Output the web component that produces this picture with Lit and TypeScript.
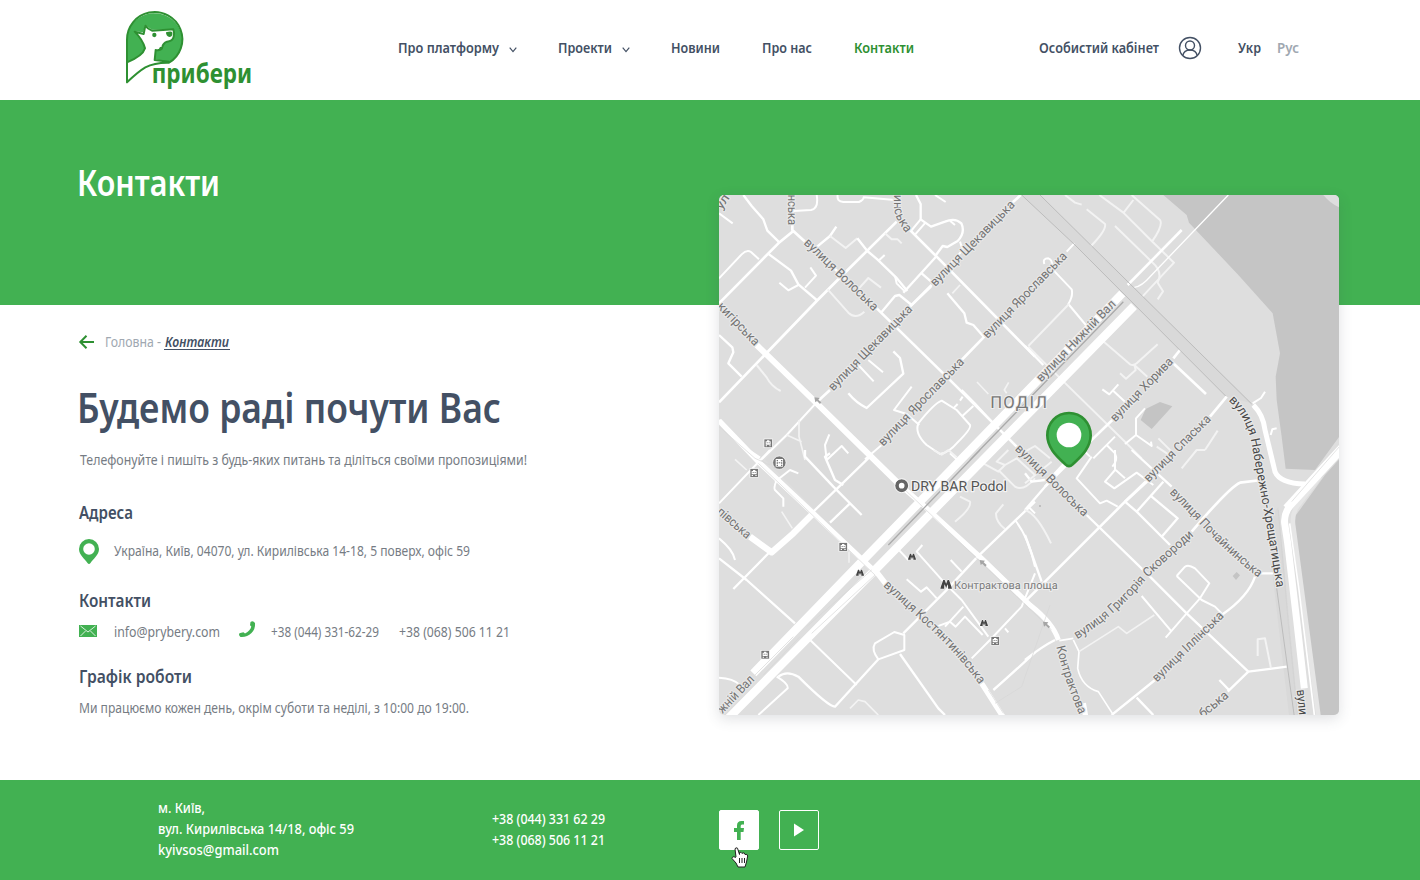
import { LitElement, html, svg, css } from "lit";
import { customElement, property } from "lit/decorators.js";

/* One line of text condensed to a fixed measure. */
@customElement("fit-text")
class FitText extends LitElement {
  @property() text = "";
  @property({ type: Number }) measure = 100;
  static styles = css`
    :host { display: block; flex: none; line-height: 0; }
    svg { display: block; overflow: visible; height: 20px; fill: currentColor; }
  `;
  render() {
    return html`<svg width=${this.measure}>
      <text x="0" y="15" textLength=${this.measure} lengthAdjust="spacingAndGlyphs">${this.text}</text>
    </svg>`;
  }
}

const t = (text: string, measure: number, cls = "") =>
  html`<fit-text class=${cls} .text=${text} .measure=${measure}></fit-text>`;

/* ---- Map data: three units per pixel; quadrants are shifted by 930 / 780 ---- */
type Road = [string, number, string?];
const L = "#f3f3f3";
const NW: Road[] = [
  ["M85 15L110 48L145 88L157 122L193 157", 7],
  ["M12 340L190 160L235 123L398 272", 8],
  ["M232 122V15", 8],
  ["M12 265L80 193Q95 178 108 186L132 208", 6],
  ["M158 190L228 242L250 283L305 330", 7],
  ["M193 278L220 301L250 285M286 232L303 257L270 293", 6],
  ["M12 70L53 100", 6],
  ["M12 637L305 333L398 240L545 95", 8],
  ["M300 175L345 138L364 110", 7],
  ["M345 138L392 174L427 145", 6, L],
  ["M427 145L457 183L487 208L543 262L577 303", 7],
  ["M493 210L509 195M540 258L545 280L567 302", 6],
  ["M305 15Q312 55 288 60L235 63M368 15Q365 35 385 36H432Q446 30 446 22L540 30", 6],
  ["M603 15L617 42V88L648 110L690 95Q720 82 739 100Q752 128 728 153L697 171L683 168L663 195", 7],
  ["M617 88L588 123M632 97L600 134M705 92L720 105M660 15L692 36", 6],
  ["M510 130L530 148L548 148L560 160", 6, L],
  ["M338 298L400 368Q422 389 448 365", 6, L],
  ["M432 295L460 264L498 293", 6, L],
  ["M580 115L665 200L960 500", 8],
  ["M498 368L540 318L553 315L590 345M663 200L565 308M648 290L590 345M620 250L652 278", 7],
  ["M470 340L700 565L830 695L905 770", 8],
  ["M735 155L743 180L670 260", 6],
  ["M917 15L890 40M650 285L585 350", 8],
  ["M697 310L748 370L755 398L775 405L806 440", 7],
  ["M735 285L712 310", 5, L],
  ["M808 440L740 510M345 600L305 637", 8],
  ["M12 435L52 472L55 487L40 520L80 560", 7],
  ["M125 525L155 562Q168 588 197 603", 6, L],
  ["M535 484L555 504L565 551L455 654Q425 640 400 610", 7],
  ["M430 525L476 574M460 510L504 547", 6],
  ["M590 590L537 660L575 672L613 705", 6],
  ["M610 700Q598 730 635 765L675 792Q700 790 730 755Q770 715 765 705L725 660L680 632Q658 640 610 700Z", 6],
  ["M743 620L735 632M715 655L728 642M742 678L775 648M705 790L725 808M500 765L450 808", 6],
  ["M786 576L820 612M881 577L868 600L875 610", 5, L],
  ["M343 733L330 765L335 810M335 810L380 768L400 790", 6],
  ["M305 637L215 735L140 808", 6],
  ["M215 735L260 755M252 690V740L270 810", 5, L],
  ["M12 690L100 780L135 803", 7],
  ["M830 695L780 640L740 600", 6],
];
const NE: Road[] = [
  ["M148 160L125 185M58 222Q52 205 70 205Q85 210 80 235L140 298Q145 318 130 342L185 408", 6],
  ["M132 342L10 468M10 470L60 520L300 755L350 805", 6, L],
  ["M0 468L55 525", 7],
  ["M185 58L240 102Q245 120 198 168M120 15L150 38L170 44", 6, L],
  ["M223 15L295 68L380 153L447 218L352 320M320 15L405 90Q415 105 383 152M325 30L296 68", 6, L],
  ["M270 108L380 215Q415 245 398 278L414 304L398 328", 6, L],
  ["M470 120L308 285", 8],
  ["M610 15L380 255Q350 290 328 292", 4],
  ["M233 452L315 523Q325 528 335 520L398 463M285 550L303 566L332 540L328 525L367 560", 6, L],
  ["M440 515L543 612", 8],
  ["M465 480L445 505M262 690L195 755L60 890", 8],
  ["M605 620L555 680M362 875L300 935", 8],
  ["M232 598L253 613L280 583M262 600L300 635M360 655L333 685V735L300 762M333 735L380 768L378 755", 6],
  ["M270 740L205 805M245 765L270 790Q280 810 262 830", 6],
  ["M400 745L440 785M395 770L440 800M540 780L578 722M540 780H515L470 835M0 785L30 768L75 805", 6, L],
  ["M683 640L708 624L720 605M737 735L742 718L755 715", 6],
];
const SW: Road[] = [
  ["M12 160L165 0M12 265Q55 300 60 330", 6],
  ["M12 325L95 390L240 520M55 417L170 300", 7],
  ["M185 90Q175 115 180 120L205 145V170M180 95L225 60L250 70", 6],
  ["M200 185L232 235M60 28L95 60", 5, L],
  ["M270 0V20L355 110L440 195M345 10L330 20L360 90L385 105M295 185L465 20M345 218L405 160", 7],
  ["M655 0L680 14L700 0L725 22M735 140L765 155Q770 175 720 215", 6, L],
  ["M865 163L843 190Q842 215 870 237M805 40L850 65L870 45L845 35L880 0M850 60L900 110Q925 125 960 85M870 45L905 25L960 75", 6, L],
  ["M1110 980L1200 1070", 7],
  ["M960 155L788 320L690 425L565 550", 7],
  ["M900 210Q940 260 960 350M940 170L960 190M0 0", 6],
  ["M550 298L580 330M622 285L605 305L690 400L740 450L820 560M707 330L740 365M575 388L618 425L635 412L665 445", 6],
  ["M665 530L705 515L722 530L750 500L803 555M690 530L745 470", 6],
  ["M960 370L920 470L825 570L770 625M870 535L880 547", 6],
  ["M538 546L480 580Q468 600 490 628L568 600L568 555Z", 6],
  ["M490 628L360 770Q340 770 250 680Q215 660 190 680M555 612L670 775L690 795", 7],
  ["M280 565L425 705M12 683Q55 685 75 705M185 680Q220 700 218 715L130 795", 6],
  ["M405 775L430 750L450 755L490 795", 5, L],
  ["M960 607Q870 690 835 720", 7],
  ["M402 305V338", 4, L],
];
const SE: Road[] = [
  ["M0 180L155 0M155 0L85 75M0 70L20 95L60 90M0 255L50 395", 7],
  ["M0 455L220 235L300 155L420 45", 8],
  ["M185 195L365 370L485 490L670 665L785 650M670 665L608 725M583 690L612 720", 7],
  ["M0 100L80 35M0 180Q35 190 78 280", 6, L],
  ["M200 20L155 85L225 160L245 152L278 170M270 0L270 60L240 95L268 115L335 68L385 105M272 60L300 85M175 0L195 20", 6],
  ["M320 0L440 110M415 95L335 185L300 155M380 140L458 205L412 258M335 185L435 285", 7],
  ["M710 90L645 98Q615 110 500 245", 8],
  ["M455 378L480 350Q490 342 510 355L553 400L525 445L485 490L422 563M455 378L530 450L570 470L590 490M350 438L440 545", 6],
  ["M690 380Q670 440 590 495M390 690L260 795M335 743L385 795M700 370H745", 7],
  ["M103 572L145 565M145 570L162 605L158 655Q170 710 220 725L262 790", 5],
  ["M162 605L280 530L305 550L388 495", 5, L],
  ["M0 630Q50 590 90 570", 7],
  ["M698 618V568L720 565L738 655", 6, L],
];
const MAJOR: Road[] = [
  ["M125 465L300 635L555 885", 18],
  ["M555 885L630 950L800 1105L945 1245Q1015 1300 1030 1350", 15],
  ["M12 692L130 815L295 970L480 1145", 16],
  ["M295 970L235 1030L170 1087L105 1040", 19],
  ["M1222 310L445 1110L115 1450", 25],
  ["M1257 348L480 1140L35 1590", 25],
  ["M480 1140L515 1185M800 1480L870 1590M1105 1540L1112 1580", 16],
];

const roads = (list: Road[]) =>
  list.map(([d, w, c]) => svg`<path d=${d} stroke=${c ?? "#fff"} stroke-width=${w} />`);

type Label = [string, number, number, number, number];
const LABELS: Label[] = [
  ["вулиця Волоська", 271, 154, 482, 358],
  ["вулиця Щекавицька", 654, 285, 895, 40],
  ["вулиця Щекавицька", 348, 598, 588, 353],
  ["вулиця Ярославська", 498, 764, 743, 511],
  ["вулиця Ярославська", 811, 441, 1052, 194],
  ["кигірська", 12, 345, 125, 463],
  ["нська", 229, 14, 229, 105],
  ["ул", 12, 56, 38, 18],
  ["вулиця Нижній Вал", 972, 571, 1198, 338],
  ["вулиця Хорива", 1194, 691, 1370, 511],
  ["вулиця Спаська", 1295, 872, 1483, 683],
  ["вулиця Волоська", 905, 772, 1112, 975],
  ["вулиця Іллінська", 1320, 1471, 1522, 1273],
  ["бська", 1458, 1578, 1537, 1513],
  ["півська", 10, 962, 101, 1041],
  ["жній Вал", 16, 1566, 114, 1464],
];
const label = ([s, x1, y1, x2, y2]: Label) => {
  const len = Math.hypot(x2 - x1, y2 - y1);
  const a = (Math.atan2(y2 - y1, x2 - x1) * 180) / Math.PI;
  return svg`<text class="street" transform=${`translate(${x1} ${y1}) rotate(${a})`} y="9"
    textLength=${len} lengthAdjust="spacingAndGlyphs">${s}</text>`;
};
const CURVES: [string, string, string, number, string][] = [
  ["c1", "M538 14V62Q545 95 574 130", "инська", 125, "street"],
  ["c2", "M1363 908L1500 1050Q1590 1135 1634 1165", "вулиця Почайнинська", 370, "street"],
  ["c3", "M1087 1348Q1210 1272 1302 1158L1441 1033", "вулиця Григорія Сковороди", 470, "street"],
  ["c4", "M1024 1370Q1048 1470 1092 1572", "Контрактова", 216, "street"],
  ["c5", "M504 1188L640 1312Q735 1400 794 1486", "вулиця Костянтинівська", 414, "street"],
  ["c6", "M1540 632Q1602 690 1613 780L1655 1010L1685 1194", "вулиця Набережно-Хрещатицька", 588, "street dark"],
  ["c7", "M1745 1500L1754 1590", "вули", 76, "street dark"],
];

const train = (x: number, y: number) => svg`<g transform=${`translate(${x} ${y})`}>
  <rect width="25" height="26" fill="#777" stroke="#fff" stroke-width="2"/>
  <path fill="#fff" d="M9 4h7v3h4v10H5V7h4zM5 19h4v3H5zM16 19h4v3h-4z"/>
  <path fill="#777" d="M8 10h3v3H8zM14 10h3v3h-3z"/></g>`;
const metro = (x: number, y: number, s: number) => svg`<path transform=${`translate(${x} ${y}) scale(${s})`}
  fill="#444" stroke="#fff" stroke-width="2" paint-order="stroke" d="M0 18L1 14L6 0H9L12 8L15 0H18L23 14L24 18H16L16 13L15 9L12 17L9 9L8 13V18Z"/>`;
const arrow = (x: number, y: number) => svg`<path transform=${`translate(${x} ${y})`} fill="#a5a5a5" d="M0 0L16 2L12 7L21 15L17 20L8 11L3 15Z"/>`;

@customElement("city-map")
class CityMap extends LitElement {
  static styles = css`
    :host { display: block; width: 620px; height: 520px; border-radius: 5px; overflow: hidden; background: #dedede; }
    svg { display: block; }
    .roads { fill: none; stroke-linejoin: round; stroke-linecap: butt; }
    text { font-family: Roboto, "Noto Sans", sans-serif; text-rendering: geometricPrecision; }
    .street { font-size: 38px; fill: #737373; stroke: #e8e8e8; stroke-width: 7px; paint-order: stroke; stroke-linejoin: round; }
    .dark { fill: #484848; }
    .area { font-size: 50px; fill: #777; stroke: #eee; stroke-width: 6px; paint-order: stroke; }
    .place { font-size: 42px; fill: #555; stroke: #f4f4f4; stroke-width: 7px; paint-order: stroke; }
    .stop { font-size: 33px; fill: #7b7b7b; stroke: #eee; stroke-width: 6px; paint-order: stroke; }
  `;
  render() {
    return html`<svg width="620" height="520" viewBox="12 15 1860 1560">
      <path fill="#dbdbdb" d="M305 650L480 810L650 950L440 1105L300 960L150 810Z"/>
      <path fill="#c5c5c5" d="M1345 15L1415 75L1422 98L1570 255L1673 370L1695 490L1682 560L1685 630L1700 740L1712 836L1800 840L1880 730V15Z"/>
      <path fill="#c5c5c5" d="M1830 855L1880 800V1580H1815L1740 1030L1736 985Z"/>
      <path fill="#dedede" d="M1825 15H1880V55Q1850 45 1825 15Z"/>
      <path fill="#c4c4c4" d="M1277 690L1292 657L1335 636L1372 649L1310 717ZM1553 1158l12-12l10 10l-12 14z"/>
      <path fill="#d9d9d9" d="M920 15L1080 165L1535 620L1610 640L975 15Z"/>
      <path fill="#d9d9d9" d="M1655 1000L1700 1390L1722 1575H1750L1690 950Z"/>
      <g class="roads">${roads(NW)}
        <g transform="translate(930 0)">${roads(NE)}</g>
        <g transform="translate(0 780)">${roads(SW)}</g>
        <g transform="translate(930 780)">${roads(SE)}</g>
        ${roads(MAJOR)}
        <path stroke="#e6e6e6" stroke-width="14" d="M1815 860L1742 955Q1730 980 1735 1010L1812 1590"/>
        <path stroke="#fff" stroke-width="15" d="M1615 645Q1645 675 1650 720L1680 845Q1695 880 1770 882"/>
        <path stroke="#fff" stroke-width="26" d="M1890 765L1715 955"/>
        <path stroke="#fff" stroke-width="21" d="M1740 928Q1705 965 1709 1000L1718 1060L1745 1290L1768 1495"/>
        <path stroke="#fff" stroke-width="5" d="M1724 1000L1752 1200L1800 1590"/>
        <path stroke="#d7d7d7" stroke-width="2" d="M1880 762L1730 935"/>
        <path stroke="#bcbcbc" stroke-width="3" d="M920 15L1080 165L1532 618M975 15L1610 642M1683 1180L1738 1580"/>
        <path stroke="#d0d0d0" stroke-width="2" d="M1690 960L1720 1300L1748 1580"/>
        <path stroke="#aaa" stroke-width="4" d="M1225 335L950 618M930 640L765 810M795 780L520 1065"/>
        <path stroke="#d7d7d7" stroke-width="2" d="M12 710L120 805L165 825M560 890L1010 1320M275 1310L470 1140M290 1330L480 1155M235 1340L120 1455M255 1340L145 1455M820 1500L865 1570M1005 1245L920 1490L840 1540M130 820L480 1155"/>
      </g>
      ${arrow(298, 622)}${arrow(794, 1110)}${arrow(984, 1295)}
      ${LABELS.map(label)}
      ${CURVES.map(([id, d, s, len, cls]) => svg`<path id=${id} d=${d} fill="none"/>
        <text class=${cls}><textPath href=${"#" + id} textLength=${len} lengthAdjust="spacingAndGlyphs">${s}</textPath></text>`)}
      <text class="area" x="826" y="653" textLength="170">ПОДІЛ</text>
      <text class="place" x="588" y="902" textLength="288" lengthAdjust="spacingAndGlyphs">DRY BAR Podol</text>
      <text class="stop" x="717" y="1196" textLength="311" lengthAdjust="spacingAndGlyphs">Контрактова площа</text>
      <circle cx="560" cy="887" r="14" fill="#fff" stroke="#666" stroke-width="11"/>
      <circle cx="560" cy="887" r="21" fill="none" stroke="#fff" stroke-width="2"/>
      <circle cx="193" cy="818" r="20" fill="#777" stroke="#fff" stroke-width="2"/>
      <path fill="#fff" d="M182 807h22v23h-22z"/><path fill="#777" d="M185 810h4v4h-4zm0 7h4v4h-4zm0 7h4v4h-4zm13-14h4v4h-4zm0 7h4v4h-4zm0 7h4v4h-4zM191 817h5v3h-5z"/>
      ${train(147, 747)}${train(105, 836)}${train(372, 1058)}${train(138, 1381)}${train(828, 1340)}
      ${metro(423, 1139, 1)}${metro(579, 1091, 1)}${metro(795, 1290, 1)}${metro(676, 1170, 1.45)}
      <circle cx="975" cy="948" r="3" fill="#b5b5b5"/>
      <path fill="#42b152" stroke="#2e9032" stroke-width="8" d="M1062 669C1024 669 997 700 997 736C997 777 1032 804 1051 823Q1062 834 1073 823C1092 804 1127 777 1127 736C1127 700 1100 669 1062 669Z"/>
      <circle cx="1062" cy="735" r="37" fill="#fff"/>
    </svg>`;
  }
}

@customElement("app-root")
class AppRoot extends LitElement {
  static styles = css`
    :host { display: flex; flex-direction: column; width: 1420px; height: 880px; overflow: hidden; background: #fff;
      color: #435064; font-family: "Noto Sans", "Open Sans", sans-serif; font-size: 14.6px; font-weight: 400; }
    * { box-sizing: border-box; }
    svg { display: block; flex: none; overflow: visible; }
    header { height: 100px; flex: none; display: flex; padding-left: 125px; font-weight: 600; font-size: 14.4px; }
    .logo { margin-top: 10px; }
    .brand { font-size: 27px; font-weight: 700; }
    .nav { display: flex; height: 20px; margin: 38px 0 0 145px; width: 641px; }
    .item { display: flex; }
    .item + .item { margin-left: 42px; }
    .item.next { margin-left: 41px; }
    .chev { margin: 9px 0 0 10px; }
    .on { color: #2e9032; }
    .account { display: flex; margin-top: 38px; }
    .avatar { margin: -2px 37px 0 20px; }
    .mute { color: #a0a8b1; margin-left: 16px; }
    .hero { height: 205px; flex: none; background: #42b152; padding: 81px 0 0 77px; color: #fff; }
    .title { font-size: 36.5px; font-weight: 600; }
    .body { height: 475px; flex: none; display: flex; padding-left: 79px; color: #767c84; }
    .left { width: 640px; padding-top: 27px; }
    .crumbs { display: flex; height: 20px; color: #a0a8b1; }
    .back { margin: 3px 11px 0 0; }
    .here { font-style: italic; font-weight: 600; color: #435064; border-bottom: 1px solid #435064; height: 18px; padding: 0 1px; margin-left: 3px; }
    .lead { color: #435064; font-weight: 600; font-size: 41px; margin: 56px 0 0 -2px; }
    .desc { margin: 22px 0 0 1px; }
    .h3 { color: #435064; font-weight: 600; font-size: 17.8px; margin-left: -0.5px; }
    .row { display: flex; }
    .map { margin-top: -110px; height: 520px; border-radius: 5px; box-shadow: 0 4px 14px rgba(60, 70, 80, .16); }
    footer { flex: 1; background: #42b152; color: #fff; display: flex; padding-left: 158px; font-weight: 500; }
    .place { width: 334px; padding-top: 18px; display: grid; gap: 1px; align-content: start; }
    .tel { width: 227px; padding-top: 29px; display: grid; gap: 1px; align-content: start; }
    .social { display: flex; gap: 20px; padding-top: 30px; position: relative; height: 70px; }
    .btn { width: 40px; height: 40px; border: 1px solid #fff; border-radius: 2px; display: grid; place-items: center; }
    .solid { background: #fff; }
    .cursor { position: absolute; left: 12px; top: 66px; }
    .a1 { margin-top: 34px; } .a2 { margin-top: 15px; height: 25px; } .a3 { margin-top: 28px; }
    .a4 { margin-top: 9px; height: 22px; } .a5 { margin-top: 25px; } .a6 { margin-top: 10px; }
    .addr { margin: 2px 0 0 15px; }
    .tall { margin-top: 1px; }
    .mail { margin: 4px 17px 0 0; } .phone { margin: 0 15px 0 19px; } .gap { margin: 1px 0 0 20px; }
  `;
  render() {
    const chev = html`<svg class="chev" width="8" height="6"><path d="M.7 .6L4 4.6L7.300 .6" fill="none" stroke="#435064" stroke-width="1.2"/></svg>`;
    return html`
      <header>
        <svg class="logo" width="128" height="82" viewBox="46 28 384 246">
          <path fill="#42b152" d="M51 186V118A83 81 0 1 1 180 186L135 177L100 160Z"/>
          <path fill="#fff" d="M52 185C75 176 100 163 107 143C101 123 92 110 73 92L101 95L106 73L127 87H170L190 85Q195 96 192 108Q189 121 170 123Q160 128 158 139Q155 151 137 150L136 176L178 184L140 191Q110 196 52 246Z"/>
          <path fill="none" stroke="#2e9032" stroke-width="6" stroke-linejoin="round" d="M52 185C75 176 100 163 106 143C101 123 92 110 75 93L102 100L107 75Q114 85 127 90L160 88L191 86Q195 96 192 108Q189 121 172 123Q160 128 158 139Q155 151 138 148L135 178L178 183"/>
          <path fill="none" stroke="#2e9032" stroke-width="6" stroke-linejoin="round" d="M52 245V118A83 82 0 1 1 178 186Q135 185 107 200Q85 213 52 245Z"/>
          <circle cx="134" cy="103" r="6.500" fill="#2e9032"/>
          <path fill="#2e9032" d="M169 95Q184 90 188 95Q190 107 180 109Q169 107 169 95Z"/><circle cx="154" cy="143" r="5" fill="#2e9032"/>
          <text class="brand" transform="translate(126 248) scale(3)" fill="#2e9032" textLength="100.5" lengthAdjust="spacingAndGlyphs">прибери</text>
        </svg>
        <div class="nav">
          <div class="item">${t("Про платформу", 101)}${chev}</div>
          <div class="item next">${t("Проекти", 54)}${chev}</div>
          <div class="item next">${t("Новини", 49)}</div>
          <div class="item">${t("Про нас", 50)}</div>
          <div class="item on">${t("Контакти", 60)}</div>
        </div>
        <div class="account">${t("Особистий кабінет", 120)}
          <svg class="avatar" width="22" height="22" viewBox="0 0 22 22" fill="none" stroke="#435064" stroke-width="1.4"><circle cx="11" cy="12" r="10.500"/><circle cx="11" cy="9.500" r="4.500"/><path d="M3.800 19.500Q5 14 11 14Q17 14 18.200 19.500"/></svg>
          ${t("Укр", 23)}${t("Рус", 22, "mute")}
        </div>
      </header>
      <div class="hero">${t("Контакти", 143, "title")}</div>
      <div class="body">
        <div class="left">
          <div class="crumbs">
            <svg class="back" width="15" height="14" fill="none" stroke="#2e9032" stroke-width="2"><path d="M15 7H1.500M7.500 .7L1.300 7L7.500 13.300"/></svg>
            ${t("Головна -", 56)}<div class="here">${t("Контакти", 64)}</div>
          </div>
          ${t("Будемо раді почути Вас", 424, "lead")}
          ${t("Телефонуйте і пишіть з будь-яких питань та діліться своїми пропозиціями!", 447, "desc")}
          ${t("Адреса", 54, "h3 a1")}
          <div class="row a2"><svg width="20" height="25"><path fill="#42b152" fill-rule="evenodd" d="M10 0A10 10 0 0 1 20 10C20 16 14 20 11.500 24Q10 26 8.500 24C6 20 0 16 0 10A10 10 0 0 1 10 0ZM10 4.200A5.800 5.800 0 1 0 10 15.800A5.800 5.800 0 1 0 10 4.200Z"/></svg>
            ${t("Україна, Київ, 04070, ул. Кирилівська 14-18, 5 поверх, офіс 59", 356, "addr")}</div>
          ${t("Контакти", 72, "h3 a3")}
          <div class="row a4">
            <svg class="mail" width="18" height="12"><path fill="#42b152" d="M0 0H18V12H0Z"/><path d="M1.500 1L9 7L16.500 1M1.500 11L6.500 6M16.500 11L11.500 6" fill="none" stroke="#fff" stroke-width=".8"/></svg>
            ${t("info@prybery.com", 106, "tall")}
            <svg class="phone" width="17" height="17"><path fill="#42b152" d="M11.500 1Q14 -1 16 2Q16.500 8 12.500 12Q8 16.500 1.500 16Q-.8 14 .5 12.300Q2 11.800 4.500 11.300L6 12.500Q11.500 9.500 12.300 5.500L11 4.200Z"/></svg>
            ${t("+38 (044) 331-62-29", 108, "tall")}${t("+38 (068) 506 11 21", 111, "gap")}
          </div>
          ${t("Графік роботи", 113, "h3 a5")}
          ${t("Ми працюємо кожен день, окрім суботи та неділі, з 10:00 до 19:00.", 390, "a6")}
        </div>
        <div class="map"><city-map></city-map></div>
      </div>
      <footer>
        <div class="place">${t("м. Київ,", 47)}${t("вул. Кирилівська 14/18, офіс 59", 196)}${t("kyivsos@gmail.com", 121)}</div>
        <div class="tel">${t("+38 (044) 331 62 29", 113)}${t("+38 (068) 506 11 21", 113)}</div>
        <div class="social">
          <div class="btn solid"><svg width="10" height="20"><path fill="#42b152" d="M3 20V12H0V8H3V5.500Q3 1 7.500 1H10V4.500H8Q6.700 4.500 6.700 6V8H10L9.500 12H6.700V20Z"/></svg></div>
          <div class="btn"><svg width="10" height="14"><path fill="#fff" d="M0 .5L10 7L0 13.500Z"/></svg></div>
          <svg class="cursor" width="18" height="22"><path fill="#fff" stroke="#222" stroke-width="1" stroke-linejoin="round" d="M5 11L4 3Q4.500 1 6.500 2.200L8.500 8.500L8.500 6.500Q10 5.500 11 7.500L12 6.800Q13.500 6.500 14 8.500Q16.500 7.500 16.700 10L15.500 16L14 21H7L5 17L1 12.500Q1.500 9.500 4.500 11.500Z"/><path stroke="#222" d="M8.500 12V17M11 12V17M13.500 12V17"/></svg>
        </div>
      </footer>`;
  }
}
